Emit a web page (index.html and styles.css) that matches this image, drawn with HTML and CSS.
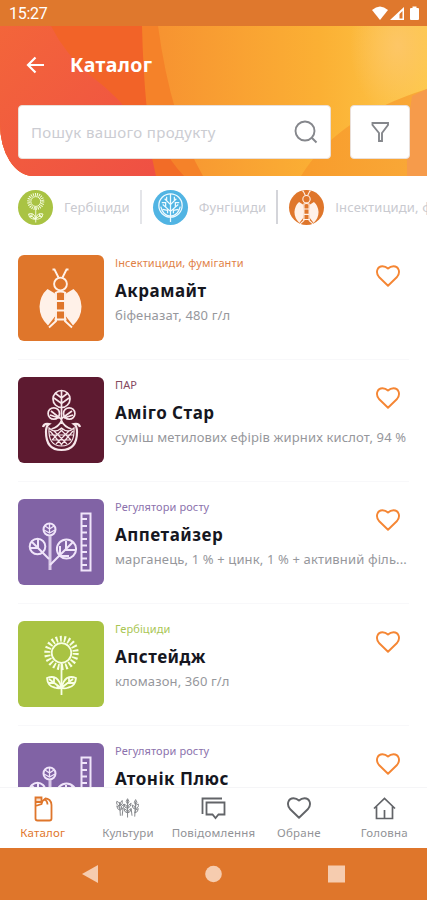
FILE: index.html
```html
<!DOCTYPE html>
<html lang="uk">
<head>
<meta charset="utf-8">
<title>Каталог</title>
<link rel="stylesheet" href="styles.css">
</head>
<body>
<svg class="defs" aria-hidden="true">
  <symbol id="insect" viewBox="0 0 86 86">
    <g fill="none" stroke="#fff1e8" stroke-width="1.900">
      <circle cx="42.500" cy="29" r="6.400"/>
      <path d="M34.500 14.500h2l4 8M50.500 14.500h-2l-4 8M37 38q5.500-3 11 0M37 46h11M37 55.500h11M36.500 64.500h12M38 38v28l-7 6.500M47 38v28l7 6.500"/>
    </g>
    <path fill="#fff1e8" d="M29.500 34L37 38.500q2 13 0 23L30 70.500q-8.500-8-8.500-19 .5-11 8-17.500zM55.500 34L48 38.500q-2 13 0 23l7 9q8.500-8 8.500-19-.5-11-8-17.500z"/>
  </symbol>
  <symbol id="basket" viewBox="0 0 86 86">
    <g fill="none" stroke="#f7e6ea" stroke-width="1.700">
      <circle cx="43.500" cy="22" r="8.500"/>
      <path d="M43.500 13v34M37 16l6.500 5 6.500-5M36 21l7.500 5.500 7.500-5.500"/>
      <circle cx="35.800" cy="36.500" r="5.700"/><circle cx="51.200" cy="36.500" r="5.700"/>
      <path d="M33 34l10 8 11-8M32 38l9 3M55 38l-9 3M43.500 44q-3 6-10 8M43.500 44q3 6 10 8"/>
      <path stroke-width="2.200" d="M25 50q1-4 6-3-3 2-3 8 0 18 15.500 18T59 55q0-6-3-8 5-1 6 3"/>
      <path stroke-width="1.200" d="M31 51q-1 18 12.500 18T56 51q-6 6-12.500 0-6.500 6-12.500 0zM32 54l12 14M36 54l13 13M42 52l11 11M55 54L43 68M51 54L38 67M45 52L34 63M32 58h23M34 63h19"/>
    </g>
  </symbol>
  <symbol id="growth" viewBox="0 0 86 86">
    <g fill="none" stroke="#f0e5fa" stroke-width="2">
      <circle cx="31.500" cy="30.500" r="6"/>
      <path stroke-width="1.300" d="M27 27l4.500 3 4.500-3M26 31l5.500 3 5.500-3M31.500 25v9"/>
      <path stroke-width="3" stroke="#d9c9e8" d="M32 37v34"/>
      <circle cx="19.500" cy="47.500" r="7.800"/><circle cx="48.500" cy="50" r="9.600"/>
      <path d="M14 43l17 17M20 40v9h-8M32 66l23-23M48 42v9h9M42 47v10h9"/>
      <path d="M63.500 14.500h9v57h-9zM64 20h5M64 27h5M64 33.500h5M64 40h5M64 46.500h5M64 53h5M64 59.500h5M64 66h5"/>
    </g>
  </symbol>
  <symbol id="sunflower" viewBox="0 0 86 86">
    <g fill="none" stroke="#f8ffe6" stroke-width="1.800">
      <circle cx="43.500" cy="32" r="9.800"/>
      <circle cx="43.500" cy="32" r="14.200" stroke-width="6" stroke-dasharray="1.900 2.156"/>
      <path d="M43.500 42v32M43.500 67l-5-1"/>
      <path d="M43.500 67q-3 1-7-.5-7-1.500-7.500-9.500 5-2 9 0 4 3 5.500 10zM43.500 67q3 1 7-.5 7-1.500 7.500-9.500-5-2-9 0-4 3-5.500 10zM31 58l12 9 12-9M36 57v5h-5M51 57v5h5"/>
    </g>
  </symbol>
  <symbol id="tree" viewBox="0 0 36 36">
    <g fill="none" stroke="#eefaff" stroke-width="1.300">
      <circle cx="18" cy="16" r="12"/>
      <path d="M18 4v29M18 27q-8-1-10-10M18 27q8-1 10-10M18 22l-8-7M18 22l8-7M18 15l-6-6M18 15l6-6M13 18v-5H9M23 18v-5h4M14 11V7M22 11V7M10 20l5 1M26 20l-5 1M15 24v-4M21 24v-4"/>
    </g>
  </symbol>
  <symbol id="heart" viewBox="0 0 24 22">
    <path fill="none" stroke="currentColor" stroke-width="1.900" stroke-linejoin="round" d="M12 20.800L3 12C-1 7 1.500 1.200 6.500 1.200q3 0 5.500 2.300 2.500-2.300 5.500-2.300C22.500 1.200 25 7 21 12z"/>
  </symbol>
</svg>
<div class="phone">
  <div class="status">
    <span class="clock">15:27</span>
    <svg class="signals" width="48" height="16" viewBox="0 0 48 16" fill="#fff">
      <path d="M0 4Q8-3 16 4L8 14z"/>
      <path fill-rule="evenodd" d="M32 1v13H18zM30.500 5v7.500h-3V8z"/>
      <path d="M38 3q0-1 1-1h1.500V.5h4V2H46q1 0 1 1v10q0 1-1 1h-7q-1 0-1-1z"/>
    </svg>
  </div>
  <header class="header">
    <svg class="header-art" viewBox="0 0 427 150" preserveAspectRatio="none">
      <defs>
        <linearGradient id="sun"><stop offset="0" stop-color="#f36b27"/><stop offset=".38" stop-color="#f79431"/><stop offset=".75" stop-color="#fbb034"/><stop offset="1" stop-color="#fdc94a"/></linearGradient>
        <linearGradient id="red" x1="0" y1="0" x2="1" y2="1"><stop offset="0" stop-color="#f3653a"/><stop offset="1" stop-color="#ef5044"/></linearGradient>
        <linearGradient id="low"><stop offset="0" stop-color="#f89c2c"/><stop offset="1" stop-color="#f9a938"/></linearGradient>
        <radialGradient id="glow"><stop offset="0" stop-color="#fdc666"/><stop offset="1" stop-color="#fdc666" stop-opacity="0"/></radialGradient>
      </defs>
      <path fill="url(#sun)" d="M0 0h427v150H0z"/>
      <path fill="#f58229" d="M142 0h16q13 95 45 150h-60z"/>
      <path fill="#f26328" d="M0 0h142q2 85 14 150H0z"/>
      <path fill="#f26c27" d="M146 78q12 45 38 72h-30z"/>
      <path fill="url(#red)" d="M0 0h51q14 28 40 50 30 22 48 50 12 22 17 50H0z"/>
      <ellipse cx="398" cy="20" rx="48" ry="70" fill="url(#glow)"/>
      <path fill="url(#low)" d="M301 150q36-59 126-87v87z"/>
      <path fill="#f69b4b" d="M407 150q-1-45 5-80l15-7v87z"/>
    </svg>
    <div class="title-row">
      <svg width="20" height="18" viewBox="0 0 20 18" fill="none" stroke="#fff" stroke-width="2.200"><path d="M9.500 1.500L2 9l7.500 7.500M2 9h16"/></svg>
      <h1>Каталог</h1>
    </div>
    <div class="search-row">
      <div class="search">
        <span>Пошук вашого продукту</span>
        <svg width="24" height="24" viewBox="0 0 24 24" fill="none" stroke="#85878c" stroke-width="1.900"><circle cx="11" cy="11" r="9.500"/><path d="M18 18l4.500 4.500"/></svg>
      </div>
      <div class="filter">
        <svg width="19" height="22" viewBox="0 0 19 22" fill="none" stroke="#85878c" stroke-width="1.900"><path d="M1.500 2h15.500v2l-6 8v8h-3v-8l-6.500-8z"/></svg>
      </div>
    </div>
  </header>
  <nav class="cats">
    <div class="cat"><svg class="disc green" viewBox="14 9 58 70"><use href="#sunflower" width="86" height="86"/></svg><span class="c1">Гербіциди</span></div>
    <i class="split"></i>
    <div class="cat"><svg class="disc blue" viewBox="0 0 36 36"><use href="#tree" width="36" height="36"/></svg><span class="c2">Фунгіциди</span></div>
    <i class="split dark"></i>
    <div class="cat"><svg class="disc orange" viewBox="12 13 61 61"><use href="#insect" width="86" height="86"/></svg><span class="c3">Інсектициди, фуміганти</span></div>
  </nav>
  <main class="list">
    <article class="item">
      <svg class="thumb orange"><use href="#insect"/></svg>
      <div class="info"><p class="kind t-orange">Інсектициди, фуміганти</p><h2>Акрамайт</h2><p class="desc">біфеназат, 480 г/л</p></div>
      <svg class="like"><use href="#heart"/></svg>
    </article>
    <article class="item">
      <svg class="thumb wine"><use href="#basket"/></svg>
      <div class="info"><p class="kind t-wine">ПАР</p><h2>Аміго Стар</h2><p class="desc">суміш метилових ефірів жирних кислот, 94 %</p></div>
      <svg class="like"><use href="#heart"/></svg>
    </article>
    <article class="item">
      <svg class="thumb purple"><use href="#growth"/></svg>
      <div class="info"><p class="kind t-purple">Регулятори росту</p><h2>Аппетайзер</h2><p class="desc">марганець, 1 % + цинк, 1 % + активний філь...</p></div>
      <svg class="like"><use href="#heart"/></svg>
    </article>
    <article class="item">
      <svg class="thumb green"><use href="#sunflower"/></svg>
      <div class="info"><p class="kind t-green">Гербіциди</p><h2>Апстейдж</h2><p class="desc">кломазон, 360 г/л</p></div>
      <svg class="like"><use href="#heart"/></svg>
    </article>
    <article class="item">
      <svg class="thumb purple"><use href="#growth"/></svg>
      <div class="info"><p class="kind t-purple">Регулятори росту</p><h2>Атонік Плюс</h2></div>
      <svg class="like"><use href="#heart"/></svg>
    </article>
  </main>
  <nav class="tabs">
    <a class="tab active"><svg width="26" height="26" viewBox="0 0 26 26" fill="none" stroke="currentColor" stroke-width="1.800"><path d="M5.500 7v15.500q0 2 2 2h12q2 0 2-2V9q0-3-2-5-2-1.500-4-1.500l-3 2.500-1 3-6 2"/><path d="M5.500 1.500h6V6h-6z" fill="currentColor" fill-opacity=".25"/><path d="M14 3.500q3.500 1 3.500 5"/></svg><span>Каталог</span></a>
    <a class="tab"><svg width="26" height="26" viewBox="-1 -1 29 29" fill="none" stroke="#85878b" stroke-width="1.100"><path d="M5 21L4 6M7 21l1-9M13 23V3M21 22l1-17M18 21l-1-8M1 5q4 1 3 5-4-1-3-5zM7 4q-3 2-2 6 3-2 2-6zM1 10q4 1 4 5-4-1-4-5zM9 8q-4 2-3 6 4-2 3-6zM13 2q-3 3 0 6 3-3 0-6zM9 8q4 1 4 5-4-1-4-5zM17 7q-4 2-4 6 4-2 4-6zM9 13q4 1 4 5-4-1-4-5zM17 13q-4 2-4 5 4-1 4-5zM22 3q-3 3 0 6 3-3 0-6zM25 8q-4 1-3 5 4-1 3-5zM18 9q4 1 4 5-4-1-4-5zM25 13q-4 1-4 5 4-1 4-5z"/></svg><span>Культури</span></a>
    <a class="tab"><svg width="26" height="26" viewBox="0 0 26 26" fill="none" stroke="#626468" stroke-width="1.800"><path d="M2.500 18V2.500H22M6.500 6.500h18v12h-6l-3 3.500-3-3.500h-6z"/></svg><span>Повідомлення</span></a>
    <a class="tab"><svg class="tab-heart" width="26" height="26" viewBox="0 0 26 26"><use href="#heart" x="1" y="1" width="24" height="22"/></svg><span>Обране</span></a>
    <a class="tab"><svg width="26" height="26" viewBox="0 0 26 26" fill="none" stroke="#626468" stroke-width="1.700"><path d="M3 12.500L13.500 2.500 24 12.500M5.500 10v12.500h16V10M13.500 22v-8"/></svg><span>Головна</span></a>
  </nav>
  <footer class="system">
    <svg width="17" height="18" viewBox="0 0 17 18"><path d="M0 9L16 0v18z"/></svg>
    <svg width="17" height="18" viewBox="0 0 17 18"><circle cx="8.500" cy="9" r="8.300"/></svg>
    <svg width="17" height="18" viewBox="0 0 17 18"><path d="M0 .5h17v17H0z"/></svg>
  </footer>
</div>
</body>
</html>
```
FILE: styles.css
```css
* { box-sizing: border-box; }
body, h1, h2, p { margin: 0; }
body { font-family: "Noto Sans", sans-serif; background: #fff; }
svg { display: block; flex: none; }
.defs { position: absolute; width: 0; height: 0; }
.phone { width: 427px; height: 900px; display: flex; flex-direction: column; overflow: hidden; }

.status { height: 26px; flex: none; background: #df782d; display: flex; justify-content: space-between; align-items: center; padding: 1px 7px 0 9px; }
.clock { font: 16px/26px Roboto, sans-serif; letter-spacing: -.3px; color: #fff; padding-top: 1px; }

.header { position: relative; height: 150px; flex: none; overflow: hidden; border-bottom-left-radius: 33px 52px; padding: 29px 17px 0 18px; }
.header-art { position: absolute; inset: 0; width: 100%; height: 100%; }
.title-row { position: relative; display: flex; align-items: center; height: 20px; padding-left: 8px; gap: 24px; }
h1 { color: #fff; font-size: 19.500px; line-height: 20px; font-weight: 700; letter-spacing: .4px; }
.search-row { position: relative; display: flex; gap: 19px; margin-top: 30px; }
.search, .filter { height: 54px; background: #fff; border-radius: 4px; border: 1px solid #eadfd8; display: flex; align-items: center; }
.search { width: 313px; justify-content: space-between; padding: 0 12px; color: #cbccd2; font-size: 15px; letter-spacing: .35px; }
.filter { width: 60px; justify-content: center; }

.cats { height: 62px; flex: none; display: flex; align-items: center; padding-left: 18px; overflow: hidden; }
.cat { display: flex; align-items: center; gap: 11px; flex: none; color: #c9cad0; font-size: 13px; letter-spacing: .15px; white-space: nowrap; }
.disc { width: 35px; height: 35px; border-radius: 50%; }
.split { width: 2px; height: 34px; background: #e4e5e9; margin: 0 11px 0 10px; flex: none; }
.split.dark { background: #d4d5da; }
.green { background: #a9c343; }
.blue { background: #51b4e3; }
.orange { background: #df762b; }
.wine { background: #5d1a30; }
.purple { background: #8163a5; }

.list { flex: 1; min-height: 0; overflow: hidden; padding: 0 18px; }
.item { position: relative; height: 122px; display: flex; gap: 11px; padding-top: 17px; border-bottom: 1px solid #f8f8fa; }
.thumb { width: 86px; height: 86px; border-radius: 6px; }
.info { width: 296px; white-space: nowrap; }
.kind { font-size: 11px; line-height: 16px; letter-spacing: .11px; }
.t-orange { color: #df8248; }
.t-wine { color: #84495e; }
.t-purple { color: #8c72ad; }
.t-green { color: #a9c654; }
h2 { font-size: 17px; line-height: 24px; margin-top: 8px; color: #16171f; letter-spacing: .5px; }
.desc { font-size: 13px; line-height: 18px; margin-top: 3px; color: #96979c; letter-spacing: .14px; }
.like { position: absolute; right: 9px; top: 27px; width: 24px; height: 22px; color: #f58634; }

.tabs { height: 61px; flex: none; display: grid; grid-template-columns: repeat(5, 1fr); border-top: 1px solid #f5f5f7; background: #fff; }
.tab { display: flex; flex-direction: column; align-items: center; padding-top: 8px; color: #929397; font-size: 11.500px; line-height: 16px; letter-spacing: .2px; gap: 3px; white-space: nowrap; }
.tab.active { color: #df762b; }
.tab-heart { color: #626468; }
.system { height: 52px; flex: none; background: #df762b; display: flex; align-items: center; justify-content: space-between; padding: 0 82px; fill: #f6ccaf; }
```
